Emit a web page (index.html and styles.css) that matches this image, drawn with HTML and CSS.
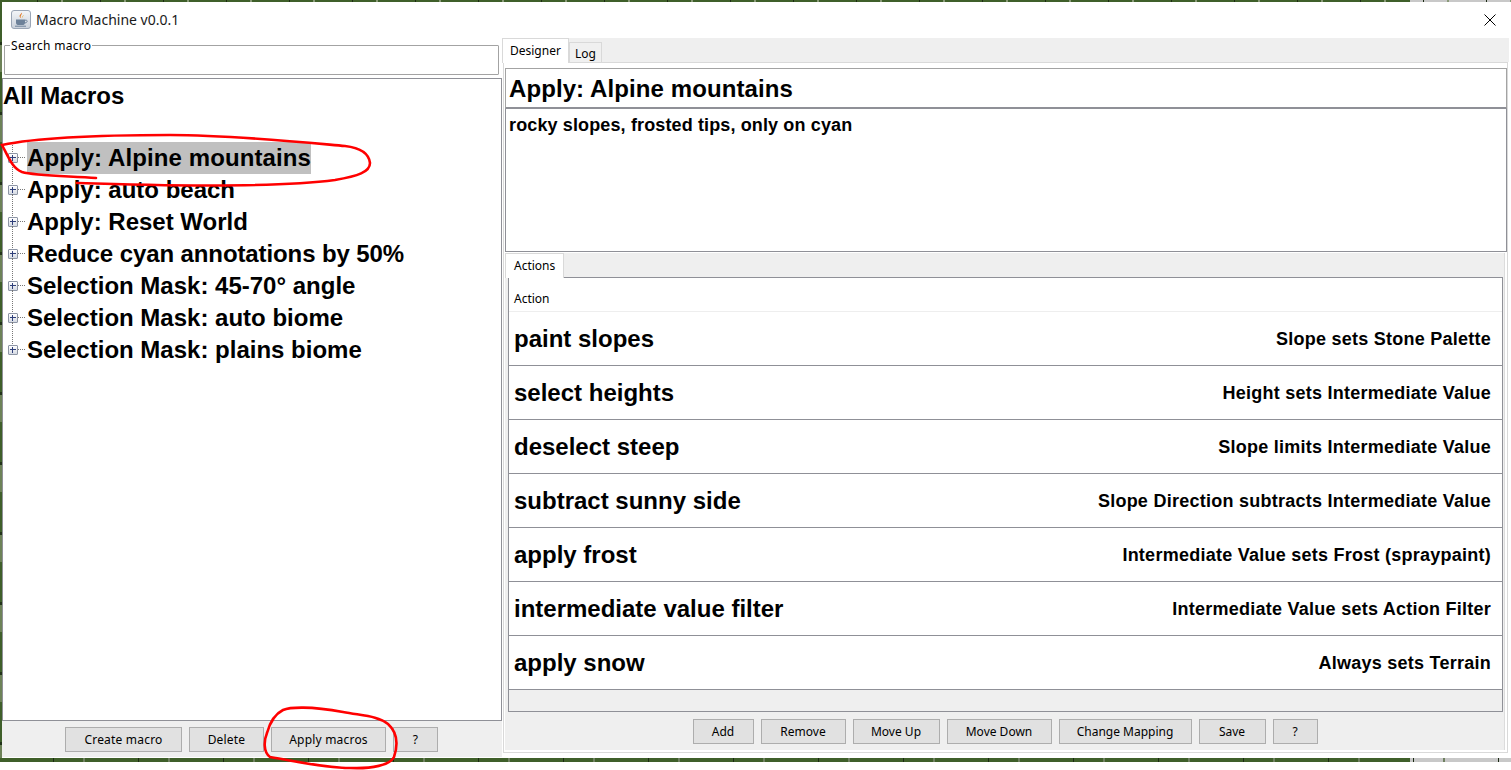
FILE: index.html
```html
<!DOCTYPE html>
<html lang="en">
<head>
<meta charset="UTF-8">
<meta name="viewport" content="width=device-width, initial-scale=1.0">
<title>Macro Machine v0.0.1</title>
<link rel="stylesheet" href="styles.css">
</head>
<body>
    <div class="strip strip-top"></div>
    <div class="middle">
        <div class="edge"></div>
        <div class="window">
            <div class="titlebar">
                <svg class="app-icon" width="20" height="20" viewBox="0 0 20 20">
                    <defs>
                        <linearGradient id="tile" x1="0" y1="0" x2="0" y2="1">
                            <stop offset="0" stop-color="#f4f6f9"/>
                            <stop offset="1" stop-color="#c9d0da"/>
                        </linearGradient>
                    </defs>
                    <rect x="0.5" y="0.5" width="19" height="18" rx="2.5" fill="url(#tile)" stroke="#9aa5b5"/>
                    <path d="M10.5 2.5c1.5 1.8-1.8 2.8-.6 5 .3.6.8 1 .8 1-1.6-.6-2.8-1.8-1.8-3.4.6-1 1.6-1.4 1.6-2.6z" fill="#e0711c"/>
                    <path d="M12.6 5c.3 1.2-1.6 1.6-1 3.2-.9-1 0-2.4 1-3.2z" fill="#e0a11c"/>
                    <path d="M5 9.5h9v3.2c0 1.500-1.200 2.300-2.500 2.300h-4C6.200 15 5 14.200 5 12.700z" fill="#6d8199"/>
                    <path d="M14 10.200h1.300c1.300 0 1.300 2.600-1.300 2.800" fill="none" stroke="#6d8199"/>
                    <path d="M4 16.200h11" stroke="#6d8199"/>
                </svg>
                <span class="app-title">Macro Machine v0.0.1</span>
                <svg class="close-icon" width="12" height="12" viewBox="0 0 12 12">
                    <path d="M0.500 0.500L11.500 11.500M11.500 0.500L0.500 11.500" stroke="#000" fill="none"/>
                </svg>
            </div>
            <div class="content">
                <div class="left-pane">
                    <fieldset class="search-box">
                        <legend>Search macro</legend>
                    </fieldset>
                    <div class="tree">
                        <div class="tree-root">All Macros</div>
                        <div class="tree-list">
                            <div class="tree-row"><span class="toggle"></span><span class="tree-label selected">Apply: Alpine mountains</span></div>
                            <div class="tree-row"><span class="toggle"></span><span class="tree-label">Apply: auto beach</span></div>
                            <div class="tree-row"><span class="toggle"></span><span class="tree-label">Apply: Reset World</span></div>
                            <div class="tree-row"><span class="toggle"></span><span class="tree-label tight">Reduce cyan annotations by 50%</span></div>
                            <div class="tree-row"><span class="toggle"></span><span class="tree-label">Selection Mask: 45-70° angle</span></div>
                            <div class="tree-row"><span class="toggle"></span><span class="tree-label">Selection Mask: auto biome</span></div>
                            <div class="tree-row"><span class="toggle"></span><span class="tree-label">Selection Mask: plains biome</span></div>
                        </div>
                    </div>
                    <div class="button-row left-buttons">
                        <button class="btn btn-create">Create macro</button>
                        <button class="btn btn-delete">Delete</button>
                        <button class="btn btn-apply">Apply macros</button>
                        <button class="btn btn-help">?</button>
                    </div>
                </div>
                <div class="right-pane">
                    <div class="tabs main-tabs">
                        <div class="tab active">Designer</div>
                        <div class="tab">Log</div>
                    </div>
                    <div class="tab-panel">
                        <div class="macro-name">Apply: Alpine mountains</div>
                        <div class="macro-desc">rocky slopes, frosted tips, only on cyan</div>
                        <div class="actions-panel">
                            <div class="tabs actions-tabs">
                                <div class="tab active">Actions</div>
                            </div>
                            <div class="table-box">
                                <div class="table-head">Action</div>
                                <div class="action-row"><span class="action-name">paint slopes</span><span class="action-map">Slope sets Stone Palette</span></div>
                                <div class="action-row"><span class="action-name">select heights</span><span class="action-map">Height sets Intermediate Value</span></div>
                                <div class="action-row"><span class="action-name">deselect steep</span><span class="action-map">Slope limits Intermediate Value</span></div>
                                <div class="action-row"><span class="action-name">subtract sunny side</span><span class="action-map">Slope Direction subtracts Intermediate Value</span></div>
                                <div class="action-row"><span class="action-name">apply frost</span><span class="action-map">Intermediate Value sets Frost (spraypaint)</span></div>
                                <div class="action-row"><span class="action-name">intermediate value filter</span><span class="action-map">Intermediate Value sets Action Filter</span></div>
                                <div class="action-row"><span class="action-name">apply snow</span><span class="action-map">Always sets Terrain</span></div>
                            </div>
                            <div class="button-row right-buttons">
                                <button class="btn btn-add">Add</button>
                                <button class="btn btn-remove">Remove</button>
                                <button class="btn btn-up">Move Up</button>
                                <button class="btn btn-down">Move Down</button>
                                <button class="btn btn-mapping">Change Mapping</button>
                                <button class="btn btn-save">Save</button>
                                <button class="btn btn-help">?</button>
                            </div>
                        </div>
                    </div>
                </div>
            </div>
        </div>
    </div>
    <div class="strip strip-bottom"></div>

    <!-- red marker scribbles on top of the screenshot -->
    <svg class="scribbles" width="1511" height="770" viewBox="0 0 1511 770">
        <path d="M96 178C70 176 35 176 22 172C12 168 8 156 2 145C40 137 110 135 170 135C230 135 300 142 345 146C362 148 369 154 370 163C370 172 358 176 335 180C290 186 200 187 77 183"/>
        <path d="M283 710C290 707 310 706 343 712C365 716 378 716 388 724C398 733 398 745 394 757C390 765 372 769 350 768C325 768 300 762 270 757C263 752 264 740 267 733C270 722 275 714 283 710"/>
    </svg>
</body>
</html>
```
FILE: styles.css
```css
* {
    box-sizing: border-box;
}
html, body {
    margin: 0;
    padding: 0;
}
body {
    width: 1511px;
    height: 770px;
    overflow: hidden;
    background-color: #fff;
    font-family: "Noto Sans", sans-serif;
    font-size: 12px;
    color: #000;
    position: relative;
}
.strip {
    background-color: #3f5f2a;
    background-image:
        repeating-linear-gradient(90deg, transparent 0 37px, #1c2a14 37px 38px, transparent 38px 61px, #8a9a78 61px 63px),
        linear-gradient(90deg, #3f5f2a 0 1410px, #c8c8c8 1410px);
}
.strip-top {
    height: 2px;
}
.strip-bottom {
    height: 4px;
    background-image:
        repeating-linear-gradient(90deg, transparent 0 53px, #1c2a14 53px 54px, transparent 54px 83px, #6f8060 83px 85px),
        linear-gradient(90deg, #3f5f2a 0 1410px, #c8c8c8 1410px);
}
.middle {
    display: flex;
    height: 756px;
}
.edge {
    width: 2px;
    background: repeating-linear-gradient(180deg, #3f5f2a 0 40px, #22331a 40px 43px, #6d8258 43px 70px);
}
.window {
    width: 1509px;
    background-color: #fff;
}
.titlebar {
    height: 36px;
    display: flex;
    align-items: center;
    padding-left: 9px;
    padding-bottom: 1px;
}
.app-icon {
    flex: none;
}
.app-title {
    margin-left: 5px;
    font-size: 14px;
    color: #1a1a1a;
}
.close-icon {
    margin-left: auto;
    margin-right: 15px;
}
.content {
    display: flex;
    height: 720px;
}
.left-pane {
    width: 500px;
    height: 720px;
    padding-top: 1px;
}
.search-box {
    margin: 0 3px 0 2px;
    padding: 0;
    height: 36px;
    border: 1px solid #a3a3a3;
    background-color: #fff;
    border-radius: 1px;
}
.search-box legend {
    margin-left: 5px;
    padding: 2px 1px 0;
    font-size: 12px;
    line-height: 10px;
    letter-spacing: 0.3px;
    background-color: #fff;
}
.tree {
    margin-top: 3px;
    height: 643px;
    border: 1px solid #8f9097;
    background-color: #fff;
}
.tree-root {
    height: 32px;
    font: bold 24px/34px "Liberation Sans", sans-serif;
}
.tree-list {
    margin-top: 31px;
}
.tree-row {
    height: 32px;
    display: flex;
    align-items: center;
}
.toggle {
    position: relative;
    flex: none;
    width: 10px;
    height: 10px;
    margin-left: 5px;
    margin-right: 9px;
    border: 1px solid #8d95a5;
    border-radius: 1px;
    background-image:
        linear-gradient(#2f3f7a, #2f3f7a),
        linear-gradient(#2f3f7a, #2f3f7a),
        linear-gradient(180deg, #fff, #d5dae3);
    background-size: 6px 1px, 1px 6px, 100% 100%;
    background-position: 1px 3px, 3px 1px, 0 0;
    background-repeat: no-repeat;
}
.toggle::before {
    content: "";
    position: absolute;
    left: 3px;
    top: -12px;
    height: 10px;
    border-left: 1px dotted #777;
}
.toggle::after {
    content: "";
    position: absolute;
    left: 9px;
    top: 3px;
    width: 7px;
    border-top: 1px dotted #777;
}
.tree-row + .tree-row .toggle::before {
    top: -24px;
    height: 22px;
}
.tree-label {
    font: bold 24px/32px "Liberation Sans", sans-serif;
    white-space: nowrap;
}
.selected {
    background-color: #c0c0c0;
    letter-spacing: 0.09px;
}
.tight {
    letter-spacing: -0.1px;
}
.button-row {
    display: flex;
    gap: 7px;
    justify-content: center;
}
.left-buttons {
    height: 36px;
    padding: 6px 1px 0 0;
    background-color: #efefef;
}
.btn {
    height: 25px;
    padding: 0;
    border: 1px solid #adadad;
    background-color: #e1e1e1;
    font-family: "Noto Sans", sans-serif;
    font-size: 12px;
    letter-spacing: 0.2px;
    color: #000;
    border-radius: 0;
}
.btn-create { width: 117px; }
.btn-delete { width: 75px; }
.btn-apply { width: 115px; }
.btn-help { width: 45px; }
.btn-add { width: 61px; }
.btn-remove { width: 85px; }
.btn-up { width: 87px; }
.btn-down { width: 105px; }
.btn-mapping { width: 133px; }
.btn-save { width: 67px; }
.right-pane {
    width: 1006px;
    margin-left: 1px;
    background: linear-gradient(#efefef 0 24px, transparent 24px);
}
.tabs {
    display: flex;
    align-items: flex-end;
    height: 24px;
}
.main-tabs {
    margin-left: -1px;
}
.tab {
    height: 20px;
    padding: 0 5px;
    border: 1px solid #d9d9d9;
    border-bottom: none;
    background-color: #f0f0f0;
    line-height: 22px;
}
.tab.active {
    height: 25px;
    padding: 0 7px;
    background-color: #fff;
    line-height: 24px;
    margin-bottom: -1px;
    position: relative;
    z-index: 1;
}
.tab-panel {
    height: 691px;
    width: 1005px;
    border: 1px solid #d9d9d9;
    background-color: #fff;
    padding: 5px 0 0 1px;
}
.macro-name {
    height: 41px;
    width: 1002px;
    border: 1px solid #a3a3a3;
    border-bottom: 2px solid #8f9097;
    padding-left: 3px;
    font: bold 24px/39px "Liberation Sans", sans-serif;
    letter-spacing: 0.09px;
}
.macro-desc {
    height: 143px;
    width: 1002px;
    border: 1px solid #8f9097;
    border-top: none;
    padding-left: 3px;
    font: bold 18px/33px "Liberation Sans", sans-serif;
    letter-spacing: 0.13px;
}
.actions-panel {
    margin-top: 1px;
    width: 1000px;
    height: 497px;
    background-color: #efefef;
    border-right: 1px solid #dcdcdc;
}
.actions-tabs .tab.active {
    padding: 0 8px;
}
.table-box {
    margin-left: 3px;
    width: 995px;
    height: 435px;
    border: 1px solid #8f9097;
    background-color: #efefef;
}
.table-head {
    height: 34px;
    padding: 9px 0 0 5px;
    background-color: #fff;
    border-bottom: 1px solid #eee;
    line-height: 24px;
}
.action-row {
    height: 54px;
    display: flex;
    align-items: center;
    justify-content: space-between;
    padding: 0 11px 0 5px;
    background-color: #fff;
    border-bottom: 1px solid #8f9097;
}
.action-name {
    font: bold 24px "Liberation Sans", sans-serif;
}
.action-map {
    margin-top: 2px;
    font: bold 18px "Liberation Sans", sans-serif;
    letter-spacing: 0.25px;
}
.right-buttons {
    margin-top: 7px;
    padding-left: 1px;
}
.right-buttons .btn {
    letter-spacing: 0;
}
.scribbles {
    position: absolute;
    left: 0;
    top: 0;
    pointer-events: none;
}
.scribbles path {
    fill: none;
    stroke: #f00;
    stroke-width: 2.6;
    stroke-linecap: round;
}
```
